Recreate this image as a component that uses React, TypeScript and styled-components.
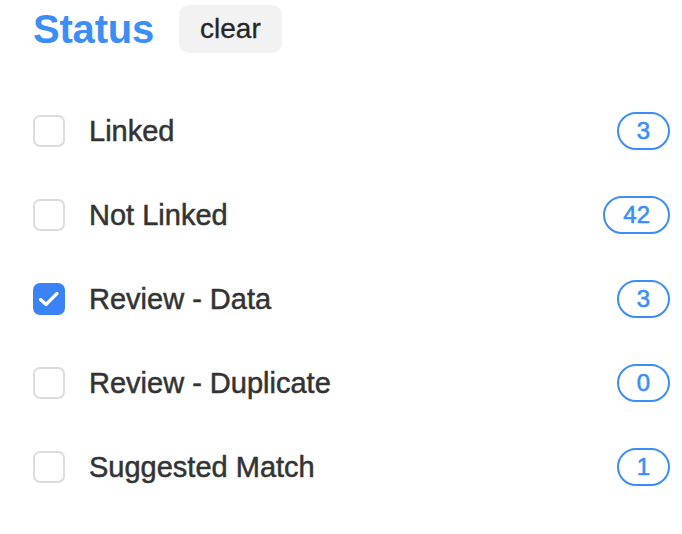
import React, { useState } from "react";
import styled, { createGlobalStyle } from "styled-components";

const Global = createGlobalStyle`
  html, body { margin: 0; padding: 0; background: #ffffff; }
  body { font-family: "Liberation Sans", Arial, sans-serif; }
`;

const Panel = styled.div`
  width: 682px;
  box-sizing: border-box;
  padding: 5px 12px 0 33px;
`;

const Header = styled.div`
  display: flex;
  align-items: center;
  gap: 25px;
  height: 48px;
`;

const Title = styled.h2`
  margin: 0;
  font-size: 40px;
  font-weight: 700;
  color: #3b8ef7;
  line-height: 1;
  letter-spacing: -0.2px;
`;

const ClearButton = styled.button`
  height: 48px;
  padding: 0 21px;
  border: none;
  border-radius: 10px;
  background: #f2f2f2;
  color: #262626;
  font-family: "Liberation Sans", Arial, sans-serif;
  font-size: 28px;
  -webkit-text-stroke: 0.3px #262626;
  cursor: pointer;
`;

const List = styled.ul`
  list-style: none;
  margin: 36px 0 0;
  padding: 0;
`;

const Row = styled.li`
  display: flex;
  align-items: center;
  height: 84px;
`;

const Box = styled.span<{ $checked: boolean }>`
  box-sizing: border-box;
  width: 32px;
  height: 32px;
  border-radius: 7px;
  flex: none;
  display: flex;
  align-items: center;
  justify-content: center;
  border: ${(p) => (p.$checked ? "none" : "2px solid #dcdcdc")};
  background: ${(p) => (p.$checked ? "#3b82f6" : "#ffffff")};
`;

const Label = styled.span`
  margin-left: 24px;
  flex: 1;
  font-size: 29px;
  color: #333333;
  -webkit-text-stroke: 0.5px #333333;
`;

const Badge = styled.span`
  box-sizing: border-box;
  height: 38px;
  padding: 0 18px;
  border: 2px solid #3b8ef7;
  border-radius: 19px;
  display: flex;
  align-items: center;
  color: #3b8ef7;
  font-size: 24px;
  -webkit-text-stroke: 0.6px #3b8ef7;
`;

const items = [
  { label: "Linked", count: 3 },
  { label: "Not Linked", count: 42 },
  { label: "Review - Data", count: 3 },
  { label: "Review - Duplicate", count: 0 },
  { label: "Suggested Match", count: 1 },
];

export default function App() {
  const [checked, setChecked] = useState<Record<string, boolean>>({ "Review - Data": true });
  return (
    <Panel>
      <Global />
      <Header>
        <Title>Status</Title>
        <ClearButton onClick={() => setChecked({})}>clear</ClearButton>
      </Header>
      <List>
        {items.map((it) => {
          const on = !!checked[it.label];
          return (
            <Row key={it.label} onClick={() => setChecked({ ...checked, [it.label]: !on })}>
              <Box $checked={on}>
                {on && (
                  <svg width="32" height="32" viewBox="0 0 32 32">
                    <path d="M7.5 16.5 L13 21.5 L24 10.5" fill="none" stroke="#fff" strokeWidth="3.2" strokeLinecap="round" strokeLinejoin="round" />
                  </svg>
                )}
              </Box>
              <Label>{it.label}</Label>
              <Badge>{it.count}</Badge>
            </Row>
          );
        })}
      </List>
    </Panel>
  );
}
